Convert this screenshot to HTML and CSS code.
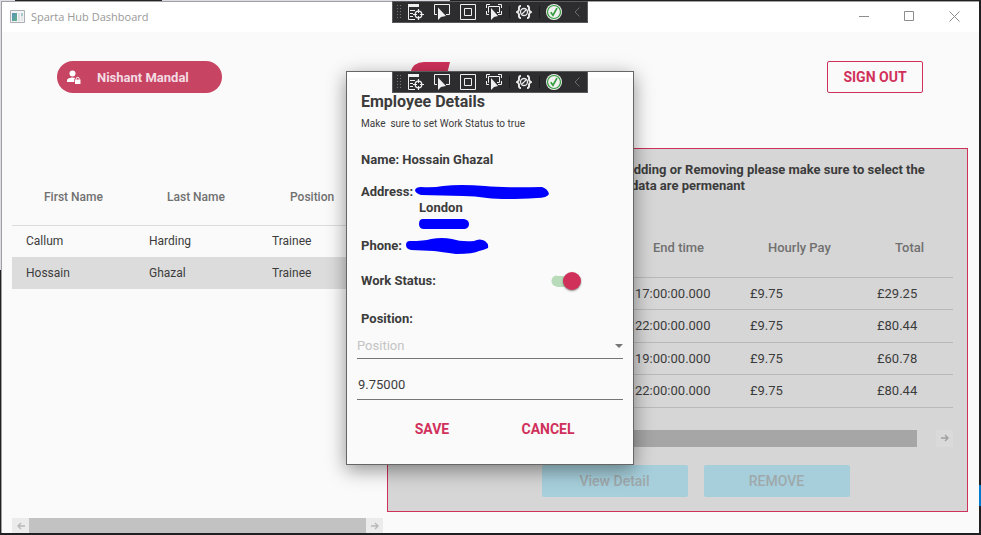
FILE: index.html
```html
<!DOCTYPE html>
<html lang="en">
<head>
<meta charset="utf-8">
<title>Sparta Hub Dashboard</title>
<link rel="stylesheet" href="styles.css">
</head>
<body>
<svg class="sprite" aria-hidden="true">
  <symbol id="i-tree" viewBox="0 0 16 16">
    <path d="M0 0h11v3H0z" fill="#f0f0f0"/>
    <path d="M.5 3v12.500H7M2 6.500h5M2 9.500h3M2 12.500h3" fill="none" stroke="#f0f0f0"/>
    <circle cx="10.500" cy="10.500" r="3.300" fill="none" stroke="#f0f0f0" stroke-width="1.300"/>
    <path d="M10.500 5v4M10.500 12v4M5 10.500h4M12 10.500h4" stroke="#f0f0f0" stroke-width="1.200"/>
  </symbol>
  <symbol id="i-select" viewBox="0 0 16 16">
    <path d="M3 10.500H.5v-10h15v10H12" fill="none" stroke="#f0f0f0"/>
    <path d="M4 3.500V16l3-3 5-1z" fill="#f0f0f0"/>
  </symbol>
  <symbol id="i-layout" viewBox="0 0 16 16">
    <path d="M.5.5h15v15H.5zM4.500 4.500h7v7h-7z" fill="none" stroke="#f0f0f0"/>
  </symbol>
  <symbol id="i-track" viewBox="0 0 16 16">
    <path d="M.5 4V.5H4M12 .5h3.500V4M.5 7v3.500H3M15.500 7v3.500H12M3 8.500H2.500v-6h11v6H11" fill="none" stroke="#f0f0f0"/>
    <path d="M5 4v12l3-3 4-1z" fill="#f0f0f0"/>
  </symbol>
  <symbol id="i-reload" viewBox="0 0 16 16">
    <path d="M5 2C2.500 2 3 4 3 5.500S1.500 8 1 8s2 1 2 2.500S2.500 14 5 14M11 2c2.500 0 2 2 2 3.500S14.500 8 15 8s-2 1-2 2.500 .5 3.500-2 3.500" fill="none" stroke="#e8e8e8" stroke-width="2"/>
    <circle cx="8" cy="8" r="3.500" fill="none" stroke="#e8e8e8" stroke-width="1.300"/>
    <path d="M5.500 10.500l5-5" stroke="#e8e8e8" stroke-width="1.300"/>
  </symbol>
  <symbol id="i-ok" viewBox="0 0 16 16">
    <circle cx="8" cy="8" r="8" fill="#f0f0f0"/>
    <circle cx="8" cy="8" r="6.500" fill="#f0f0f0" stroke="#339c3c" stroke-width="1.200"/>
    <path d="M4.700 8.200l2.300 3 4-7" fill="none" stroke="#339c3c" stroke-width="1.700"/>
  </symbol>
  <symbol id="i-chevron" viewBox="0 0 6 10">
    <path d="M5.500.5L1 5l4.500 4.500" fill="none" stroke="#6d6d70"/>
  </symbol>
  <symbol id="i-left" viewBox="0 0 8 8">
    <path d="M8 4H1M4 1L1 4l3 3" fill="none" stroke="currentColor" stroke-width="1.400"/>
  </symbol>
  <symbol id="i-right" viewBox="0 0 8 8">
    <path d="M0 4h7M4 1l3 3-3 3" fill="none" stroke="currentColor" stroke-width="1.400"/>
  </symbol>
</svg>

<div class="window">
  <header class="titlebar">
    <svg class="app-icon" viewBox="0 0 15 13" aria-hidden="true">
      <defs><linearGradient id="pane" x2="1" y2="1"><stop offset="0" stop-color="#5b8fb5"/><stop offset="1" stop-color="#62b58c"/></linearGradient></defs>
      <path d="M.5.5h14v12H.5z" fill="#f3f3f3" stroke="#aab0b6"/>
      <path d="M2 3h5v8H2z" fill="url(#pane)"/>
      <path d="M8 3h2v8H8z" fill="#dde3e6"/><path d="M11 3h2v3h-2z" fill="#a9c8cf"/><path d="M11 6h2v5h-2z" fill="#e3e6e8"/>
    </svg>
    <span class="caption">Sparta Hub Dashboard</span>
    <button class="win-btn" aria-label="Minimize"><svg viewBox="0 0 11 11"><path d="M0 5.500h10"/></svg></button>
    <button class="win-btn" aria-label="Maximize"><svg viewBox="0 0 11 11"><path d="M.5.5h9v9h-9z"/></svg></button>
    <button class="win-btn" aria-label="Close"><svg viewBox="0 0 11 11"><path d="M.5.5l10 10M10.500.5l-10 10"/></svg></button>
  </header>

  <div class="topbar">
    <button class="user">
      <svg viewBox="0 0 14 14" aria-hidden="true">
        <circle cx="5.500" cy="3.500" r="3" fill="#fff"/>
        <path d="M0 12V10.500C0 8.500 3 7.500 5.500 7.500c1 0 2 .2 2.800.5L7.300 9v3z" fill="#fff"/>
        <path d="M8 9.500h5.500V14H8z" fill="#fff"/>
        <path d="M9.200 9.500V8.800a1.500 1.500 0 0 1 3 0v.7" fill="none" stroke="#fff"/>
      </svg>
      <span>Nishant Mandal</span>
    </button>
    <svg class="logo" viewBox="0 0 40 32" aria-hidden="true"><path d="M0 12Q3 1 14 1h26l-4 16H0z" fill="#d0315a"/></svg>
    <button class="signout">SIGN OUT</button>
  </div>

  <main class="main">
    <section class="staff">
      <table class="grid staff-grid">
        <colgroup><col class="c-name"><col class="c-name"><col></colgroup>
        <thead><tr><th>First Name</th><th>Last Name</th><th>Position</th></tr></thead>
        <tbody>
          <tr><td>Callum</td><td>Harding</td><td>Trainee</td></tr>
          <tr class="selected"><td>Hossain</td><td>Ghazal</td><td>Trainee</td></tr>
        </tbody>
      </table>
      <div class="scroll staff-scroll">
        <button aria-label="Scroll left"><svg><use href="#i-left"/></svg></button>
        <div class="thumb"></div>
        <button aria-label="Scroll right"><svg><use href="#i-right"/></svg></button>
      </div>
    </section>

    <section class="card">
      <p class="note"><span>Adding or Removing please make sure to select the</span><span class="note-second">data are permenant</span></p>
      <table class="grid pay-grid">
        <colgroup><col><col class="c-end"><col class="c-pay"><col class="c-total"></colgroup>
        <thead><tr><td></td><th>End time</th><th>Hourly Pay</th><th>Total</th></tr></thead>
        <tbody>
          <tr><td></td><td>17:00:00.000</td><td>£9.75</td><td>£29.25</td></tr>
          <tr><td></td><td>22:00:00.000</td><td>£9.75</td><td>£80.44</td></tr>
          <tr><td></td><td>19:00:00.000</td><td>£9.75</td><td>£60.78</td></tr>
          <tr><td></td><td>22:00:00.000</td><td>£9.75</td><td>£80.44</td></tr>
        </tbody>
      </table>
      <div class="scroll card-scroll">
        <div class="thumb"></div>
        <button aria-label="Scroll right"><svg><use href="#i-right"/></svg></button>
      </div>
      <div class="actions">
        <button disabled>View Detail</button>
        <button disabled>REMOVE</button>
      </div>
    </section>
  </main>
</div>

<div class="debug" role="toolbar">
  <i class="grip"></i>
  <button><svg><use href="#i-tree"/></svg></button>
  <button><svg><use href="#i-select"/></svg></button>
  <button><svg><use href="#i-layout"/></svg></button>
  <button><svg><use href="#i-track"/></svg></button>
  <i class="sep"></i>
  <button><svg><use href="#i-reload"/></svg></button>
  <i class="sep"></i>
  <button><svg><use href="#i-ok"/></svg></button>
  <button class="collapse"><svg><use href="#i-chevron"/></svg></button>
</div>

<div class="dialog" role="dialog" aria-labelledby="dlg-title">
  <div class="debug" role="toolbar">
    <i class="grip"></i>
    <button><svg><use href="#i-tree"/></svg></button>
    <button><svg><use href="#i-select"/></svg></button>
    <button><svg><use href="#i-layout"/></svg></button>
    <button><svg><use href="#i-track"/></svg></button>
    <i class="sep"></i>
    <button><svg><use href="#i-reload"/></svg></button>
    <i class="sep"></i>
    <button><svg><use href="#i-ok"/></svg></button>
    <button class="collapse"><svg><use href="#i-chevron"/></svg></button>
  </div>
  <form class="form">
    <h1 id="dlg-title">Employee Details</h1>
    <p class="hint">Make&nbsp; sure to set Work Status to true</p>
    <p class="field name">Name: Hossain Ghazal</p>
    <div class="field address">
      <span>Address:</span>
      <div class="lines">
        <svg class="ink ink-street" viewBox="0 0 134 16"><path d="M6 3Q18 4 28 2Q45 0 70 2Q90 4 127 3Q133 5 134 10Q132 14 122 14Q90 16 72 14Q60 12 48 12L6 11Q0 9 0 6Q1 3 6 3z"/></svg>
        <span class="city">London</span>
        <svg class="ink ink-code" viewBox="0 0 50 16"><path d="M4 3h41q5 1 5 5t-4 5H5Q0 13 0 8t4-5z"/></svg>
      </div>
    </div>
    <div class="field phone">
      <span>Phone:</span>
      <svg class="ink ink-phone" viewBox="0 0 83 16"><path d="M4 3Q18 3 25 1Q36-1 46 1Q55 4 68 3Q74 0 79 3Q83 6 82 10Q78 12 73 13Q68 16 50 16Q35 14 28 13L5 12Q0 11 0 7T4 3z"/></svg>
    </div>
    <div class="field status">
      <label for="work">Work Status:</label>
      <input id="work" type="checkbox" checked>
    </div>
    <label class="field position" for="pos">Position:</label>
    <div class="select"><select id="pos"><option>Position</option></select></div>
    <input class="rate" type="text" value="9.75000" aria-label="Hourly pay">
    <div class="buttons">
      <button type="button">SAVE</button>
      <button type="button">CANCEL</button>
    </div>
  </form>
</div>
</body>
</html>
```
FILE: styles.css
```css
* { box-sizing: border-box; }

body {
  margin: 0;
  height: 100vh;
  padding: 1px 2px 2px 1px;
  overflow: hidden;
  display: flex;
  position: relative;
  background:
    linear-gradient(#007acc, #007acc) right 0 top 485px / 2px 21px no-repeat,
    linear-gradient(#dcdce6, #dcdce6) 0 0 / 1px 270px no-repeat,
    linear-gradient(90deg, #dcdce6 15px, #252526 15px 162px, #dcdce6 162px) 0 0 / 450px 1px no-repeat,
    #202022;
  color: #3c3c3c;
  font-family: Roboto, sans-serif;
  font-size: 13px;
}

button, input, select { font: inherit; color: inherit; }
button { padding: 0; border: 0; background: none; }
p, h1 { margin: 0; }
.sprite { position: absolute; width: 0; height: 0; }

.window {
  flex: 1;
  min-width: 0;
  display: flex;
  flex-direction: column;
  border: solid #a0a0a0;
  border-width: 1px 0 0 1px;
  background: #fafafa;
}

.titlebar {
  height: 30px;
  flex: none;
  display: flex;
  align-items: center;
  padding: 0 2px 2px 8px;
  background: #fff;
}
.app-icon { width: 15px; height: 13px; margin-right: 6px; }
.caption { flex: 1; color: #999; font: 11px "Open Sans", sans-serif; }
.win-btn { width: 45px; height: 28px; display: grid; place-items: center; }
.win-btn svg { width: 11px; height: 11px; fill: none; stroke: #8c8c8c; }

.topbar {
  display: flex;
  align-items: center;
  padding: 29px 56px 0 55px;
}
.user {
  width: 165px;
  height: 32px;
  display: flex;
  align-items: center;
  gap: 16px;
  padding-left: 10px;
  border-radius: 16px;
  background: #c74463;
  color: #f3dce2;
  font-weight: 700;
}
.user svg { width: 14px; height: 14px; }
.logo { width: 40px; height: 32px; margin-left: 188px; margin-right: auto; }
.signout {
  width: 96px;
  height: 32px;
  border: 1px solid #d0315a;
  border-radius: 2px;
  color: #d0315a;
  font-size: 14px;
  font-weight: 700;
}

.main {
  flex: 1;
  min-height: 0;
  display: flex;
  gap: 4px;
  margin-top: 55px;
  padding: 0 11px 0 10px;
}

.grid { width: 100%; border-collapse: collapse; table-layout: fixed; }
.grid th { text-align: left; font-weight: 500; color: #707070; padding: 0 0 0 32px; }
.grid td { padding: 0 0 0 14px; }

.staff {
  flex: none;
  width: 371px;
  display: flex;
  flex-direction: column;
  padding-top: 22px;
}
.staff-grid { font-size: 12px; }
.c-name { width: 123px; }
.staff-grid thead tr { height: 55px; border-bottom: 1px solid #dcdcdc; }
.staff-grid tbody tr { height: 32px; }
.selected { background: #dcdcdc; }

.scroll { display: flex; }
.scroll button { width: 17px; display: grid; place-items: center; background: #ebebeb; color: #b8b8b8; }
.scroll svg { width: 8px; height: 8px; }
.thumb { flex: 1; background: #c2c2c2; }
.staff-scroll { height: 15px; margin-top: auto; }

.card {
  flex: 1;
  min-width: 0;
  margin-bottom: 21px;
  padding: 13px 14px 0;
  border: 1px solid #d0315a;
  background: #d6d6d6;
}
.note { padding-left: 223px; font-weight: 700; line-height: 16px; white-space: nowrap; }
.note span { display: block; }
.note-second { padding-left: 6px; }
.pay-grid { margin-top: 25px; }
.pay-grid tr { border-bottom: 1px solid #b9b9b9; }
.pay-grid thead tr { height: 58px; }
.pay-grid tbody tr { height: 33px; }
.pay-grid tbody tr:nth-child(odd) { height: 32px; }
.c-end { width: 115px; }
.c-pay { width: 127px; }
.c-total { width: 90px; }
.card-scroll { height: 17px; margin-top: 22px; }
.card-scroll .thumb { margin-right: 19px; background: #a6a6a6; }
.card-scroll button { background: #dadada; color: #a0a0a0; }
.actions {
  display: flex;
  justify-content: center;
  gap: 16px;
  margin-top: 18px;
  padding-left: 36px;
}
.actions button {
  width: 146px;
  height: 32px;
  border-radius: 2px;
  background: #a6cfdb;
  color: #9fa8ab;
  font-size: 14px;
  font-weight: 500;
}

.debug {
  position: absolute;
  top: 1px;
  left: 392px;
  width: 196px;
  height: 22px;
  display: flex;
  align-items: stretch;
  border: 1px solid #5a5a5c;
  background: #2d2d30;
}
.debug button { width: 26px; display: grid; place-items: center; }
.debug svg { width: 16px; height: 16px; }
.debug .collapse { width: 20px; }
.debug .collapse svg { width: 6px; height: 10px; }
.grip {
  width: 6px;
  margin: 2px 1px 2px 3px;
  background: radial-gradient(circle, #77777a 1px, transparent 1px) 0 0 / 3px 3px;
}
.sep { width: 1px; margin: 4px 1px 4px 2px; background: #1c1c1e; }

.dialog {
  position: absolute;
  top: 71px;
  left: 346px;
  width: 288px;
  border: 1px solid #666;
  background: linear-gradient(#fff 6px, #fafafa 6px);
  box-shadow: 0 5px 18px rgba(0, 0, 0, .42);
}
.dialog .debug { top: -1px; left: 45px; }
.form { padding: 20px 10px 19px; font-weight: 700; }
.form h1 { padding-left: 4px; font-size: 16px; line-height: 20px; }
.hint { padding: 6px 0 0 4px; font-size: 10px; font-weight: 400; line-height: 12px; }
.field { padding-left: 4px; line-height: 16px; }
.name { margin-top: 22px; }
.address { display: flex; gap: 2px; margin-top: 16px; }
.lines { display: flex; flex-direction: column; }
.city { padding-left: 4px; }
.ink { height: 16px; fill: #00f; }
.ink-street { width: 134px; }
.ink-code { width: 50px; margin-left: 4px; }
.ink-phone { width: 83px; }
.phone { display: flex; gap: 4px; margin-top: 6px; }
.status {
  display: flex;
  align-items: center;
  justify-content: space-between;
  margin-top: 18px;
  padding-right: 42px;
}
.status input {
  appearance: none;
  width: 30px;
  height: 18px;
  margin: 0;
  background:
    radial-gradient(circle at 6px 9px, #b8dcba 5px, transparent 6px) 0 0 / 6px 18px no-repeat,
    linear-gradient(#b8dcba, #b8dcba) 6px 4px / 16px 11px no-repeat;
  display: flex;
  justify-content: flex-end;
}
.status input::before {
  content: "";
  width: 18px;
  height: 18px;
  border-radius: 50%;
  background: #d0315a;
  box-shadow: 0 1px 2px rgba(0, 0, 0, .45);
}
.position { display: block; margin-top: 21px; }
.select {
  display: flex;
  align-items: center;
  height: 32px;
  padding-top: 6px;
  border-bottom: 1px solid #757575;
}
.select select {
  flex: 1;
  appearance: none;
  height: 24px;
  padding: 0;
  border: 0;
  background: none;
  color: #c4c4c4;
  font-weight: 400;
}
.select::after {
  content: "";
  border: 4px solid transparent;
  border-top-color: #757575;
  border-bottom: 0;
}
.rate {
  display: block;
  width: 100%;
  height: 30px;
  margin-top: 11px;
  padding: 0 1px;
  border: 0;
  border-bottom: 1px solid #757575;
  background: none;
  font-weight: 400;
}
.buttons { display: flex; margin-top: 13px; padding: 0 17px; }
.buttons button { flex: 1; height: 32px; color: #d0315a; font-size: 14px; font-weight: 700; }
```
